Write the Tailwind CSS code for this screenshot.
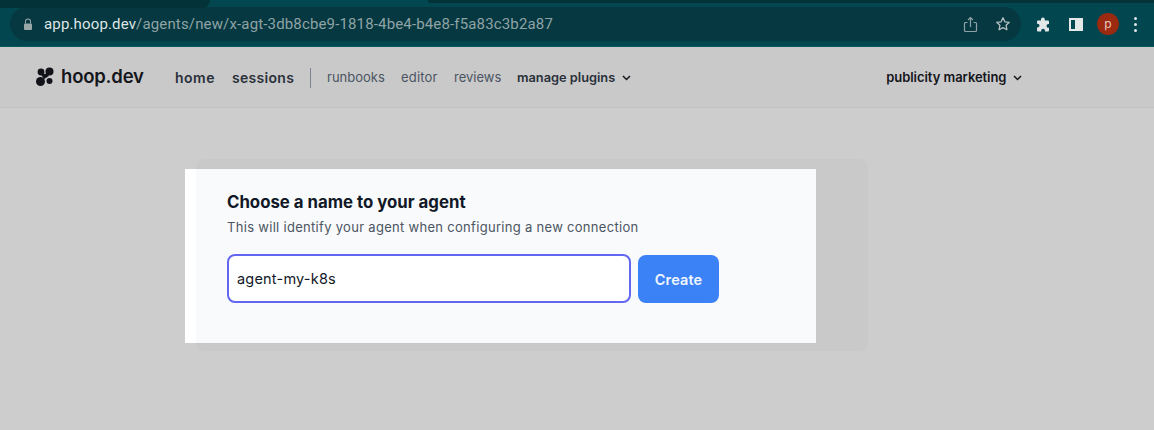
<!DOCTYPE html>
<html>

<head>
    <meta charset="UTF-8">
    <title>hoop.dev</title>
    <script src="https://cdn.jsdelivr.net/npm/@tailwindcss/browser@4"></script>
</head>

<body class="bg-[#cdcdcd] h-[430px] w-[1154px] overflow-hidden font-['Inter',sans-serif]">
    <!-- browser chrome -->
    <div class="h-[47px] bg-[#02474f] border-b border-[#0a5a62] relative">
        <div class="absolute left-0 top-0 w-[210px] h-[8px] bg-[#033238] rounded-br-lg"></div>
        <div class="absolute left-[428px] right-0 top-0 h-[3px] bg-[#033238] rounded-bl-lg"></div>
        <div class="flex items-center h-full pl-[10px] pr-[11px] pt-[2px]">
            <div class="w-[1011px] h-[34px] rounded-full bg-[#053840] flex items-center pl-[13px] pr-[10px]">
                <svg class="w-[10px] h-[13px] mr-[11px]" viewBox="0 0 10 13" fill="#9aa7a9">
                    <path d="M2 5.500V3.600a3 3 0 0 1 6 0v1.900H7V3.600a2 2 0 0 0-4 0v1.900z"/>
                    <rect x="1" y="5.500" width="8" height="6.500" rx="1"/>
                </svg>
                <span class="text-[15px] text-[#dfe5e6] tracking-[0.15px] font-['Roboto',sans-serif]">app.hoop.dev<span class="text-[#8fa3a6]">/agents/new/x-agt-3db8cbe9-1818-4be4-b4e8-f5a83c3b2a87</span></span>
                <div class="ml-auto flex items-center gap-[17px]">
                    <svg class="w-[15px] h-[17px]" viewBox="0 0 15 17" fill="none" stroke="#8fa3a6" stroke-width="1.2">
                        <path d="M4.500 6.500H2.500a1 1 0 0 0-1 1v7a1 1 0 0 0 1 1h10a1 1 0 0 0 1-1v-7a1 1 0 0 0-1-1h-2"/>
                        <path d="M7.500 11V1.500M5 4l2.500-2.500L10 4"/>
                    </svg>
                    <svg class="w-[16px] h-[16px]" viewBox="0 0 16 16" fill="none" stroke="#b4c0c2" stroke-width="1.3" stroke-linejoin="round">
                        <path d="M8 1.800l1.900 4 4.400.5-3.200 3 .8 4.400L8 11.600l-3.900 2.100.8-4.400-3.200-3 4.400-.5z"/>
                    </svg>
                </div>
            </div>
            <svg class="w-[15px] h-[15px] ml-[15px]" viewBox="0 0 15 15" fill="#e4e8e9">
                <path d="M5 2.500a1.900 1.900 0 0 1 3.800 0V3.500H12a1 1 0 0 1 1 1V7h-.6a1.900 1.900 0 0 0 0 3.800h.6V13.500a1 1 0 0 1-1 1H9v-.8a1.900 1.900 0 0 0-3.800 0v.8H2a1 1 0 0 1-1-1V10.500h.6a1.900 1.900 0 0 0 0-3.800H1V4.500a1 1 0 0 1 1-1h3z"/>
            </svg>
            <div class="w-[14px] h-[13px] ml-[18px] border-2 border-[#e4e8e9] flex justify-end">
                <div class="w-[6px] h-full bg-[#e4e8e9]"></div>
            </div>
            <div class="w-[22px] h-[22px] ml-[14px] rounded-full bg-[#9c2a10] text-[#e8c9c0] text-[12px] flex items-center justify-center">p</div>
            <div class="ml-[15px] flex flex-col gap-[3px]">
                <div class="w-[3px] h-[3px] rounded-full bg-[#dfe5e6]"></div>
                <div class="w-[3px] h-[3px] rounded-full bg-[#dfe5e6]"></div>
                <div class="w-[3px] h-[3px] rounded-full bg-[#dfe5e6]"></div>
            </div>
        </div>
    </div>

    <!-- app header -->
    <div class="h-[61px] bg-[#c9c9c9] border-b border-[#c2c2c2] flex items-center pl-[36px] pt-[1px]">
        <svg class="w-[18px] h-[20px] mr-[7px] -mt-[1px]" viewBox="0 0 18 20" fill="#111318">
            <circle cx="5" cy="5" r="3.400"/>
            <circle cx="13.500" cy="4.500" r="4"/>
            <circle cx="4.500" cy="14.500" r="4.500"/>
            <circle cx="13.500" cy="14" r="3"/>
            <path d="M5 7.500L11 6.500L13 9L8 12z"/>
        </svg>
        <span class="text-[18.500px] font-semibold text-[#14161b] tracking-[-0.2px] w-[114px] -mt-[2px]">hoop.dev</span>
        <span class="text-[14px] font-semibold text-[#2a303a] tracking-[0.5px] w-[57px]">home</span>
        <span class="text-[14px] font-semibold text-[#2a303a] tracking-[0.3px] w-[78px]">sessions</span>
        <div class="w-px h-[20px] bg-[#7d8294] mr-[16px]"></div>
        <span class="text-[13px] text-[#4b5563] w-[74px]">runbooks</span>
        <span class="text-[13px] text-[#4b5563] tracking-[0.2px] w-[53px]">editor</span>
        <span class="text-[13px] text-[#4b5563] w-[63px]">reviews</span>
        <span class="text-[12.800px] font-semibold text-[#2a303a]">manage plugins</span>
        <svg class="w-[9px] h-[6px] ml-[7px]" viewBox="0 0 9 6" fill="none" stroke="#14161b" stroke-width="1.500">
            <path d="M1 1l3.500 3.500L8 1"/>
        </svg>
        <span class="text-[13px] font-semibold text-[#14161b] ml-[255px] tracking-[-0.05px]">publicity marketing</span>
        <svg class="w-[9px] h-[6px] ml-[7px]" viewBox="0 0 9 6" fill="none" stroke="#14161b" stroke-width="1.500">
            <path d="M1 1l3.500 3.500L8 1"/>
        </svg>
    </div>

    <!-- card -->
    <div class="relative ml-[196px] mt-[51px] w-[672px] h-[192px] rounded-lg bg-[#c9c9c9]">
        <div class="absolute -left-[11px] top-[10px] w-[631px] h-[174px] bg-white pl-[11px]">
            <div class="h-full bg-[#f9fafb] pl-[31px] pt-[23px]">
                <h2 class="text-[16.800px] leading-[20px] font-bold text-[#111827]">Choose a name to your agent</h2>
                <p class="text-[13px] leading-[18px] text-[#4b5563] mt-[6px] tracking-[0.3px]">This will identify your agent when configuring a new connection</p>
                <div class="flex items-center gap-[7px] mt-[18px]">
                    <div class="w-[404px] h-[49px] rounded-lg border-2 border-[#6366f1] bg-white flex items-center pl-[8px] pt-[1px] text-[14.500px] text-[#111827] tracking-[0.2px]">agent-my-k8s</div>
                    <button class="w-[81px] h-[48px] rounded-lg bg-[#3b82f6] pt-[2px] text-[14.500px] font-semibold text-[#eff6ff] tracking-[0.1px]">Create</button>
                </div>
            </div>
        </div>
    </div>
</body>

</html>
